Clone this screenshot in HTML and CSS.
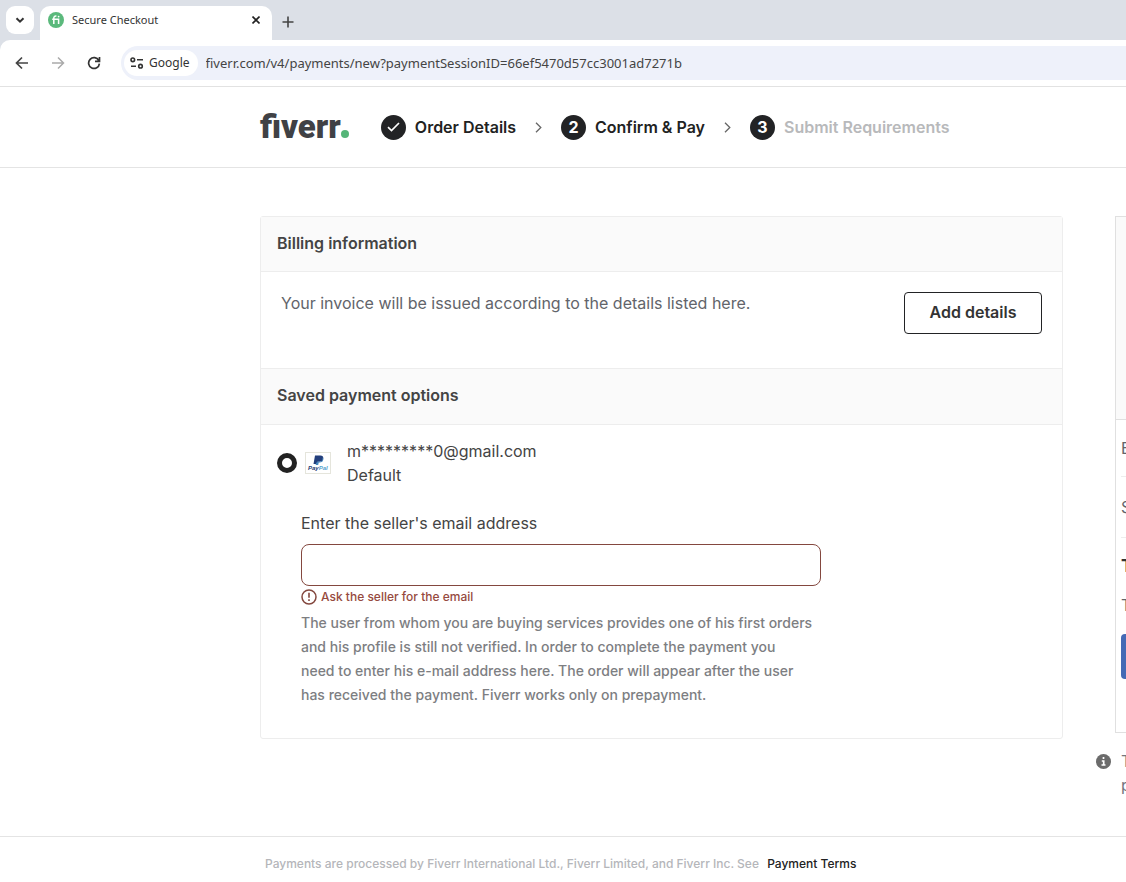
FILE: index.html
```html
<!DOCTYPE html>
<html lang="en">
<head>
<meta charset="utf-8">
<meta name="viewport" content="width=device-width, initial-scale=1">
<title>Secure Checkout</title>
<link rel="stylesheet" href="styles.css">
</head>
<body>
<div class="browser">
  <div class="tabstrip">
    <button class="tab-search" aria-label="Search tabs"><svg width="10" height="10" viewBox="0 0 10 10"><path d="M1.500 3.200L5 6.700l3.500-3.500" fill="none" stroke="#333" stroke-width="2"/></svg></button>
    <div class="tab">
      <svg width="16" height="16" viewBox="0 0 16 16"><circle cx="8" cy="8" r="8" fill="#5bb97c"/><path d="M5.800 12V6.200c0-1.600.8-2.200 2.600-2.100M4.200 7.200h6.400V12" fill="none" stroke="#fff" stroke-width="1.500"/><circle cx="10.600" cy="4.600" r=".9" fill="#fff"/></svg>
      <span class="tab-title">Secure Checkout</span>
      <button class="tab-close" aria-label="Close tab"><svg width="8" height="8" viewBox="0 0 8 8"><path d="M.5.5l7 7M7.500.5l-7 7" stroke="#222" stroke-width="1.600"/></svg></button>
    </div>
    <button class="tab-new" aria-label="New tab"><svg width="12" height="12" viewBox="0 0 12 12"><path d="M6 .5v11M.5 6h11" stroke="#444" stroke-width="1.600"/></svg></button>
  </div>
  <div class="toolbar">
    <button class="nav-button" aria-label="Back"><svg width="14" height="14" viewBox="0 0 14 14"><path d="M13 7H2M7 1.500L1.500 7 7 12.500" fill="none" stroke="#444" stroke-width="1.700"/></svg></button>
    <button class="nav-button" aria-label="Forward"><svg width="14" height="14" viewBox="0 0 14 14"><path d="M1 7h11M7 1.500L12.500 7 7 12.500" fill="none" stroke="#aaa" stroke-width="1.500"/></svg></button>
    <button class="nav-button" aria-label="Reload"><svg width="14" height="14" viewBox="0 0 14 14"><path d="M11.800 4.500A5.400 5.400 0 1 0 12.400 7.600M12.500 1v4.400H8" fill="none" stroke="#333" stroke-width="1.700"/></svg></button>
    <div class="address">
      <button class="site-chip"><svg width="14" height="12" viewBox="0 0 14 12"><g fill="none" stroke="#333" stroke-width="1.600"><circle cx="2.800" cy="2.800" r="1.800"/><path d="M7 2.800h6M1 9.200h5"/><circle cx="10.500" cy="9.200" r="1.800"/></g></svg>Google</button>
      <input class="url" aria-label="Address" value="fiverr.com/v4/payments/new?paymentSessionID=66ef5470d57cc3001ad7271b">
    </div>
  </div>
</div>

<header class="site-header">
  <a class="logo" href="#">fiverr<svg width="8" height="8" viewBox="0 0 8 8"><circle cx="4" cy="4" r="4" fill="#55b578"/></svg></a>
  <ol class="steps">
    <li class="step"><span class="badge"><svg width="13" height="10" viewBox="0 0 13 10"><path d="M1 5.200L4.500 8.500 12 1" fill="none" stroke="#fff" stroke-width="1.700"/></svg></span>Order Details</li>
    <li class="arrow"><svg width="7" height="11" viewBox="0 0 7 11"><path d="M1 .8l4.800 4.700L1 10.200" fill="none" stroke="#666" stroke-width="1.300"/></svg></li>
    <li class="step"><span class="badge">2</span>Confirm &amp; Pay</li>
    <li class="arrow"><svg width="7" height="11" viewBox="0 0 7 11"><path d="M1 .8l4.800 4.700L1 10.200" fill="none" stroke="#666" stroke-width="1.300"/></svg></li>
    <li class="step step-next"><span class="badge">3</span>Submit Requirements</li>
  </ol>
</header>

<main class="checkout">
  <div class="panel">
    <h2 class="panel-title">Billing information</h2>
    <section class="billing">
      <p class="billing-text">Your invoice will be issued according to the details listed here.</p>
      <button class="outline-button">Add details</button>
    </section>
    <h2 class="panel-title panel-title-next">Saved payment options</h2>
    <section class="payment">
      <label class="option">
        <input class="radio" type="radio" name="payment" checked>
        <svg class="paypal" width="26" height="22" viewBox="0 0 26 22"><rect x=".5" y=".5" width="25" height="21" fill="#fff" stroke="#e5e5dc"/><path d="M10 3.500h5.200c2.600 0 3.600 1.500 3 3.600-.6 2.100-2 2.700-4 2.700h-1.600L12 12H8.500z" fill="#233f7c"/><path d="M17.500 5.500c1 .7 1 2 .5 3-.6 1.500-1.800 1.900-3.300 1.900h-1L13.200 13h-2.600l.4-1.600 1-1.600h2.200c2 0 3-.9 3.300-2.500z" fill="#4386bd"/><text class="paypal-name" x="3" y="18"><tspan fill="#263b72">Pay</tspan><tspan fill="#55a2cd">Pal</tspan></text></svg>
        <span class="account"><span>m*********0@gmail.com</span><span>Default</span></span>
      </label>
      <div class="seller">
        <label class="seller-label" for="seller-email">Enter the seller's email address</label>
        <input class="seller-input" id="seller-email" type="email" aria-describedby="seller-error">
        <p class="error" id="seller-error"><svg width="16" height="16" viewBox="0 0 16 16"><circle cx="8" cy="8" r="7" fill="none" stroke="#84483f" stroke-width="1.500"/><path d="M8 3.800v5M8 10.300v1.800" stroke="#84483f" stroke-width="1.600"/></svg>Ask the seller for the email</p>
        <p class="hint">The user from whom you are buying services provides one of his first orders<br>and his profile is still not verified. In order to complete the payment you<br>need to enter his e-mail address here. The order will appear after the user<br>has received the payment. Fiverr works only on prepayment.</p>
      </div>
    </section>
  </div>
  <aside class="summary">
    <div class="summary-card">
      <div class="summary-top"></div>
      <div class="summary-body">
        <p class="row row-first">E</p>
        <p class="row row-fee">S</p>
        <p class="row row-total">T</p>
        <p class="row">T</p>
        <button class="pay" aria-label="Pay"></button>
      </div>
    </div>
    <div class="note"><svg width="15" height="15" viewBox="0 0 15 15"><circle cx="7.500" cy="7.500" r="7.500" fill="#6b6b6b"/><path d="M7.500 3v2M5.800 7h1.900v4M5.500 11h4" fill="none" stroke="#fff" stroke-width="1.700"/></svg><p class="note-text">T<br>p</p></div>
  </aside>
</main>

<footer class="footer">Payments are processed by Fiverr International Ltd., Fiverr Limited, and Fiverr Inc. See <a class="terms" href="#">Payment Terms</a></footer>
</body>
</html>
```
FILE: styles.css
```css
* { box-sizing: border-box; }
body {
  margin: 0;
  overflow-x: hidden;
  background: #fff;
  color: #444;
  font-family: Inter, "Liberation Sans", sans-serif;
  font-size: 16px;
  line-height: 24px;
}
h2, p, ol { margin: 0; padding: 0; }
svg { flex: none; display: block; }
button { font: inherit; color: inherit; border: 0; background: none; padding: 0; cursor: pointer; }
a { color: inherit; text-decoration: none; }

/* browser chrome */
.browser { background: #dce0e7; font-family: "Noto Sans", sans-serif; border-bottom: 1px solid #e2e2e2; }
.tabstrip { display: flex; align-items: flex-end; height: 40px; padding-left: 6px; }
.tab-search {
  display: grid; place-items: center;
  width: 28px; height: 28px; margin: 0 6px 6px 0;
  border-radius: 9px; background: #fff;
}
.tab {
  display: flex; align-items: center; gap: 8px;
  width: 232px; height: 34px; padding: 0 12px 6px 8px;
  border-radius: 10px 10px 0 0; background: #fff;
}
.tab-title { flex: 1; font-size: 11px; color: #333; }
.tab-new { margin: 0 0 12px 10px; }
.toolbar {
  display: flex; align-items: center; gap: 22px;
  height: 46px; padding-left: 15px;
  border-radius: 10px 0 0 0; background: #fff;
}
.address {
  display: flex; flex: 1; align-items: center; gap: 8px;
  height: 34px; padding-left: 3px; margin-left: -2px;
  border-radius: 17px 0 0 17px; background: #eef1fa;
}
.site-chip {
  display: flex; align-items: center; gap: 5px;
  height: 26px; padding: 0 8px 0 6px;
  border-radius: 13px; background: #fff; color: #333; font-size: 12px;
}
.url { flex: 1; min-width: 0; padding: 0; border: 0; outline: 0; background: none; color: #444; font: 13px "Noto Sans", sans-serif; }

/* site header */
.site-header {
  display: flex; align-items: center; gap: 32px;
  height: 81px; padding-left: 260px;
  border-bottom: 1px solid #e4e4e4;
}
.logo { display: flex; align-items: baseline; font-family: Roboto, sans-serif; font-size: 33px; font-weight: 900; line-height: 40px; color: #404145; }
.steps { display: flex; align-items: center; list-style: none; white-space: nowrap; }
.step { display: flex; align-items: center; gap: 9px; color: #222; font-weight: 600; }
.step-next { color: #b8b9bb; }
.arrow { padding: 0 19px; }
.badge { display: grid; place-items: center; width: 25px; height: 25px; border-radius: 50%; background: #222325; color: #fff; font-weight: 700; }

/* checkout */
.checkout { display: grid; grid-template-columns: minmax(0, 1fr) 30px; column-gap: 33px; align-items: start; padding: 48px 0 39px 260px; }
.panel { border: 1px solid #ededed; border-radius: 3px; }
.panel-title { height: 55px; padding: 14px 16px; border-bottom: 1px solid #ededed; background: #fafafa; font-size: 16px; font-weight: 600; line-height: 24px; }
.panel-title-next { height: 57px; border-top: 1px solid #ededed; }
.billing { display: flex; justify-content: space-between; align-items: flex-start; height: 96px; padding: 20px 20px 0; }
.billing-text { color: #62646a; line-height: 22px; }
.outline-button { width: 138px; height: 42px; padding-bottom: 2px; border: 1px solid #222325; border-radius: 4px; color: #333; font-weight: 600; }
.payment { padding: 14px 16px 31px; }
.option { display: flex; align-items: center; gap: 8px; }
.radio { appearance: none; width: 20px; height: 20px; margin: 0; border: 5px solid #222; border-radius: 50%; background: #fff; }
.paypal-name { font: italic 700 6px "Liberation Sans", sans-serif; }
.account { display: grid; padding-left: 8px; }
.seller { max-width: 520px; margin: 24px 0 0 24px; }
.seller-label { display: block; }
.seller-input { display: block; width: 100%; height: 42px; margin-top: 9px; padding: 0 12px; border: 1px solid #84483f; border-radius: 8px; background: #fff; font: inherit; }
.error { display: flex; align-items: center; gap: 4px; color: #964a40; font-size: 12px; font-weight: 500; line-height: 22px; }
.hint { margin-top: 3px; color: #7d7e82; font-size: 14px; font-weight: 500; }

/* order summary */
.summary { min-width: 0; white-space: nowrap; }
.summary-card { height: 517px; margin-left: 19px; border: 1px solid #e0e0e0; border-right: 0; }
.summary-top { height: 203px; border-bottom: 1px solid #e0e0e0; background: #fafafa; }
.summary-body { padding-left: 5px; color: #62646a; }
.row { padding: 9px 0; }
.row-first { padding: 16px 0; border-bottom: 1px solid #ededed; }
.row-fee { padding: 18px 0; border-bottom: 1px solid #ededed; }
.row-total { padding: 16px 0 6px; color: #333; font-size: 18px; font-weight: 700; }
.pay { display: block; width: 40px; height: 45px; margin-top: 8px; border-radius: 4px; background: #446ab5; }
.note { display: flex; gap: 10px; padding-top: 16px; }
.note-text { color: #74767e; line-height: 24px; }
.note svg { margin-top: 5px; }

.footer { padding: 15px 0 6px 265px; border-top: 1px solid #e4e4e4; color: #b5b6ba; font-size: 12px; font-weight: 500; white-space: nowrap; }
.terms { margin-left: 5px; color: #222; }
```
